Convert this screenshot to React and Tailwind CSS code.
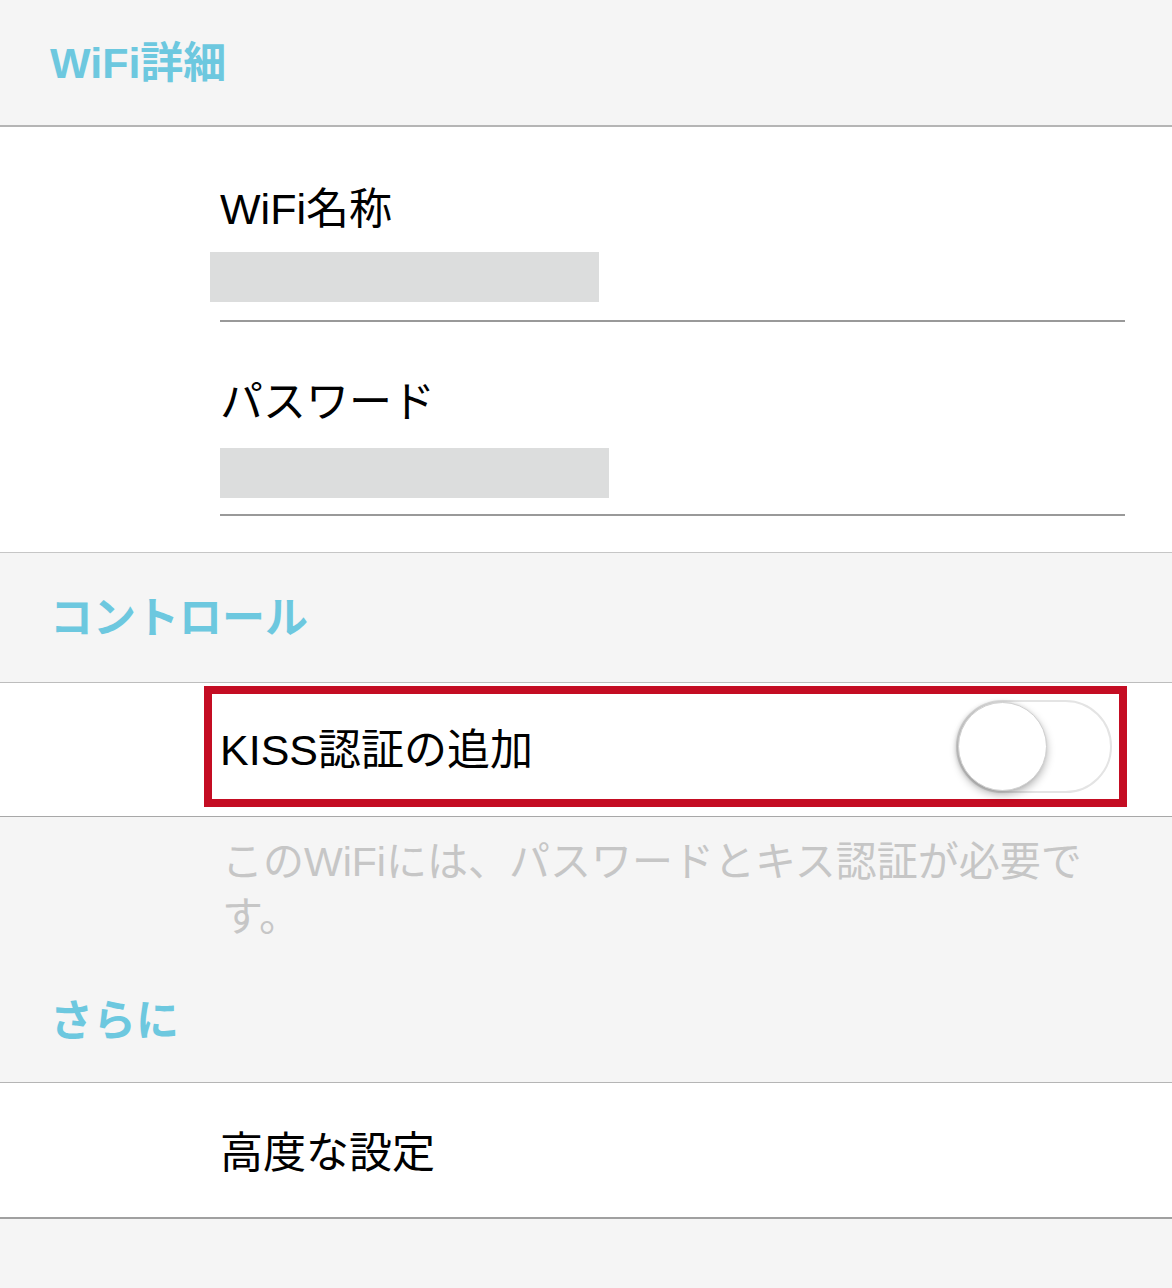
export default function App() {
  const font = { fontFamily: '"Liberation Sans", "Noto Sans CJK JP", sans-serif' };

  return (
    <div className="w-[1172px] h-[1288px] bg-[#f5f5f5] overflow-hidden" style={font}>
      {/* WiFi詳細 */}
      <div className="h-[127px] flex items-center pl-[50px] border-b-2 border-[#b5b5b5]">
        <h2 className="text-[43px] leading-[50px] font-bold text-[#6dc8df]">WiFi詳細</h2>
      </div>

      <div className="bg-white h-[426px] pt-[57px] border-b border-[#c6c6c6]">
        <div className="pl-[220px] text-[43px] leading-[50px] text-black">WiFi名称</div>
        <div className="ml-[210px] mt-[18px] w-[389px] h-[50px] bg-[#dcdddd]" />
        <div className="ml-[220px] mt-[18px] w-[905px] h-[2px] bg-[#999999]" />

        <div className="pl-[220px] mt-[55px] text-[43px] leading-[50px] text-black">パスワード</div>
        <div className="ml-[220px] mt-[21px] w-[389px] h-[50px] bg-[#dcdddd]" />
        <div className="ml-[220px] mt-[16px] w-[905px] h-[2px] bg-[#999999]" />
      </div>

      {/* コントロール */}
      <div className="h-[130px] flex items-center pl-[50px] border-b border-[#bdbdbd]">
        <h2 className="text-[43px] leading-[50px] font-bold text-[#6dc8df]">コントロール</h2>
      </div>

      <div className="bg-white h-[134px] pt-[3px] border-b border-[#a8a8a8]">
        <div className="ml-[204px] w-[923px] h-[121px] border-[8px] border-[#c40d23] flex items-center justify-between pl-[8px] pr-[7px]">
          <span className="pt-[6px] text-[43px] leading-[50px] text-black">KISS認証の追加</span>
          <div className="relative w-[156px] h-[93px] rounded-full border-2 border-[#e4e4e4] bg-white">
            <div className="absolute left-[0px] top-[0px] w-[89px] h-[89px] rounded-full bg-white border border-[#d0d0d0] shadow-[0_4px_8px_rgba(0,0,0,0.28),-2px_0_4px_rgba(0,0,0,0.15)]" />
          </div>
        </div>
      </div>

      <div className="pl-[222px] pt-[18px] w-[1110px] text-[41px] leading-[55px] text-[#c6c6c6]">
        このWiFiには、パスワードとキス認証が必要です。
      </div>

      {/* さらに */}
      <div className="h-[138px] flex items-center pt-[14px] pl-[50px] border-b border-[#b5b5b5]">
        <h2 className="text-[43px] leading-[50px] font-bold text-[#6dc8df]">さらに</h2>
      </div>

      <div className="bg-white h-[136px] flex items-center pt-[6px] pl-[220px] border-b-2 border-[#a0a0a0]">
        <span className="text-[43px] leading-[50px] text-black">高度な設定</span>
      </div>
    </div>
  );
}
